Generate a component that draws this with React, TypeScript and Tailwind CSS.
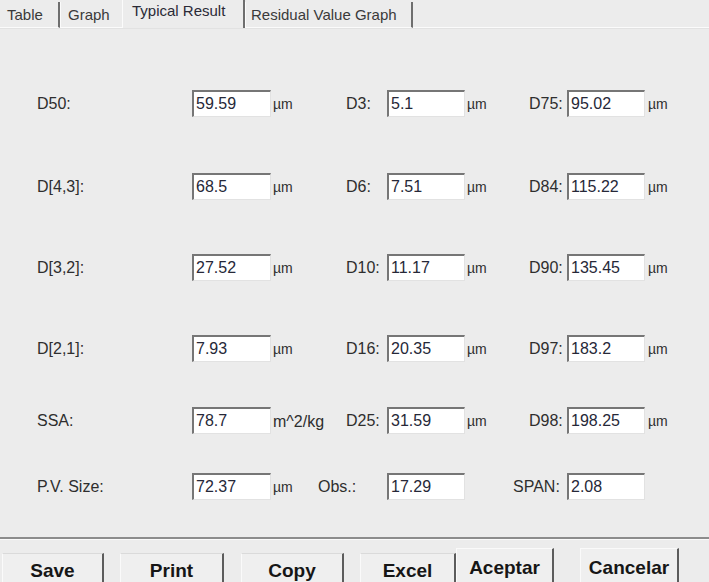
import React from "react";

const FONT = { fontFamily: '"Liberation Sans", Arial, sans-serif' };

type Row = {
  top: string;
  label1: string;
  v1: string;
  unit1: string;
  label2: string;
  v2: string;
  label3: string;
  v3: string;
};

const ROWS: Row[] = [
  { top: "mt-[61px]", label1: "D50:", v1: "59.59", unit1: "µm", label2: "D3:", v2: "5.1", label3: "D75:", v3: "95.02" },
  { top: "mt-[56px]", label1: "D[4,3]:", v1: "68.5", unit1: "µm", label2: "D6:", v2: "7.51", label3: "D84:", v3: "115.22" },
  { top: "mt-[54px]", label1: "D[3,2]:", v1: "27.52", unit1: "µm", label2: "D10:", v2: "11.17", label3: "D90:", v3: "135.45" },
  { top: "mt-[54px]", label1: "D[2,1]:", v1: "7.93", unit1: "µm", label2: "D16:", v2: "20.35", label3: "D97:", v3: "183.2" },
  { top: "mt-[45px]", label1: "SSA:", v1: "78.7", unit1: "m^2/kg", label2: "D25:", v2: "31.59", label3: "D98:", v3: "198.25" },
];

function Box({ value, w }: { value: string; w: string }) {
  return (
    <div
      className={`${w} flex h-[27px] shrink-0 items-center border-b border-l-2 border-r border-t-2 border-b-[#e2e2e2] border-l-[#767676] border-r-[#e2e2e2] border-t-[#767676] bg-white pl-[2px] text-[16px] text-[#262838]`}
    >
      {value}
    </div>
  );
}

function Tab({ label, className }: { label: string; className: string }) {
  return <div className={`shrink-0 whitespace-nowrap text-[15px] ${className}`}>{label}</div>;
}

function Button({ label, className }: { label: string; className: string }) {
  return (
    <div
      className={`flex h-[40px] shrink-0 justify-center border-l border-t border-l-[#fafafa] border-t-[#dadada] border-r-2 border-r-[#5c5c5c] bg-[#efefef] text-[19px] font-bold text-[#161616] ${className}`}
    >
      {label}
    </div>
  );
}

export default function App() {
  return (
    <div className="h-[582px] w-[709px] overflow-hidden bg-[#ececec] text-[#2e2e2e]" style={FONT}>
      {/* tabs */}
      <div className="flex h-[28px] items-end">
        <Tab label="Table" className="h-[26px] w-[60px] border-b border-r-2 border-b-[#fbfbfb] border-r-[#6e6e6e] pl-[7px] pt-[2px] text-[#3a3a3a]" />
        <Tab label="Graph" className="h-[26px] w-[62px] border-b border-l border-b-[#fbfbfb] border-l-[#fbfbfb] pl-[7px] pt-[2px] text-[#3a3a3a]" />
        <Tab label="Typical Result" className="h-[28px] w-[123px] border-l border-r-2 border-l-[#fbfbfb] border-r-[#6e6e6e] pl-[9px] text-[#2a2a36]" />
        <Tab label="Residual Value Graph" className="h-[26px] w-[168px] border-b border-l border-r-2 border-b-[#fbfbfb] border-l-[#fbfbfb] border-r-[#6e6e6e] pl-[5px] pt-[2px] text-[#3a3a3a]" />
        <div className="h-[26px] flex-1 border-b border-b-[#fbfbfb]" />
      </div>
      <div className="h-[1px] bg-[#e2e2e2]" />

      {/* fields */}
      <div className="text-[16px]">
        {ROWS.map((r) => (
          <div key={r.label1} className={`flex items-center pl-[37px] ${r.top}`}>
            <div className="w-[155px] shrink-0">{r.label1}</div>
            <Box value={r.v1} w="w-[79px]" />
            <div className={`w-[75px] shrink-0 pl-[2px] pt-[2px] ${r.unit1 === "µm" ? "text-[14px]" : "text-[16px]"}`}>{r.unit1}</div>
            <div className="w-[41px] shrink-0">{r.label2}</div>
            <Box value={r.v2} w="w-[78px]" />
            <div className="w-[64px] shrink-0 pl-[2px] pt-[2px] text-[14px]">µm</div>
            <div className="w-[38px] shrink-0">{r.label3}</div>
            <Box value={r.v3} w="w-[78px]" />
            <div className="pl-[3px] pt-[2px] text-[14px]">µm</div>
          </div>
        ))}
        <div className="mt-[39px] flex items-center pl-[37px]">
          <div className="w-[155px] shrink-0">P.V. Size:</div>
          <Box value="72.37" w="w-[79px]" />
          <div className="w-[47px] shrink-0 pl-[2px] pt-[2px] text-[14px]">µm</div>
          <div className="w-[69px] shrink-0">Obs.:</div>
          <Box value="17.29" w="w-[78px]" />
          <div className="w-[48px] shrink-0" />
          <div className="w-[54px] shrink-0">SPAN:</div>
          <Box value="2.08" w="w-[78px]" />
        </div>
      </div>

      {/* separator */}
      <div className="mt-[37px] h-[2px] bg-[#8c8c8c]" />
      <div className="h-[1px] bg-[#fafafa]" />

      {/* buttons */}
      <div className="flex items-start">
        <Button label="Save" className="ml-[2px] mt-[13px] w-[102px] pt-[3px]" />
        <Button label="Print" className="ml-[16px] mt-[13px] w-[104px] pt-[3px]" />
        <Button label="Copy" className="ml-[17px] mt-[13px] w-[103px] pt-[3px]" />
        <Button label="Excel" className="ml-[16px] mt-[13px] w-[96px] pt-[3px]" />
        <Button label="Aceptar" className="mt-[8px] w-[98px] border-t-[#fafafa] pt-[5px]" />
        <Button label="Cancelar" className="ml-[26px] mt-[8px] w-[99px] border-t-[#fafafa] pt-[5px]" />
      </div>
    </div>
  );
}
